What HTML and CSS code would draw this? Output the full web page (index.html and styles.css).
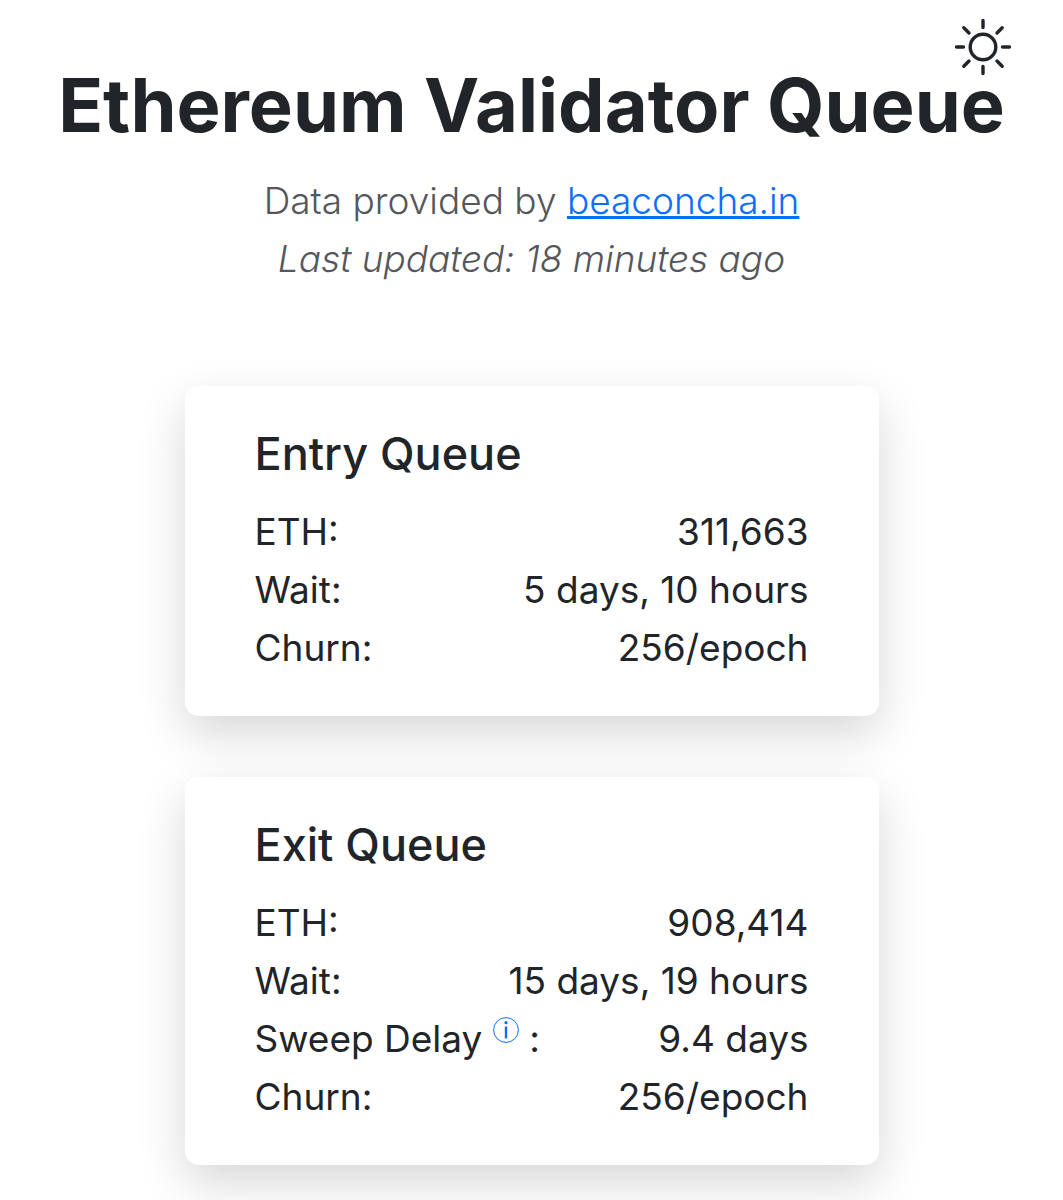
FILE: index.html
```html
<!DOCTYPE html>
<html lang="en">
<head>
  <meta charset="UTF-8">
  <meta name="viewport" content="width=device-width, initial-scale=1.0">
  <title>Ethereum Validator Queue</title>
  <link rel="stylesheet" href="styles.css">
</head>
<body>
  <button class="theme-toggle" type="button" aria-label="Toggle theme">
    <svg viewBox="0 0 58 58" fill="none" stroke="currentColor" stroke-width="3.400" stroke-linecap="round" aria-hidden="true">
      <circle cx="29" cy="29" r="12.800"/>
      <path d="M29 2.500v7M29 48.500v7M2.500 29h7M48.500 29h7M9.800 9.800l5.200 5.200M43 43l5.200 5.200M9.800 48.200l5.200-5.200M43 15l5.200-5.200"/>
    </svg>
  </button>

  <header class="header">
    <h1>Ethereum Validator Queue</h1>
    <p class="lead">Data provided by <a href="#">beaconcha.in</a></p>
    <p class="lead"><em>Last updated: 18 minutes ago</em></p>
  </header>

  <main class="queues">
    <section class="card">
      <h2>Entry Queue</h2>
      <dl>
        <div class="row"><dt>ETH:</dt><dd>311,663</dd></div>
        <div class="row"><dt>Wait:</dt><dd>5 days, 10 hours</dd></div>
        <div class="row"><dt>Churn:</dt><dd>256/epoch</dd></div>
      </dl>
    </section>

    <section class="card">
      <h2>Exit Queue</h2>
      <dl>
        <div class="row"><dt>ETH:</dt><dd>908,414</dd></div>
        <div class="row"><dt>Wait:</dt><dd>15 days, 19 hours</dd></div>
        <div class="row">
          <dt>Sweep Delay <a class="info" href="#" aria-label="About sweep delay"><svg viewBox="0 0 26 26" fill="none" stroke="currentColor" aria-hidden="true"><circle cx="13" cy="13" r="12.400"/><path d="M13 9.500v12" stroke-width="2.400"/><circle cx="13" cy="5.700" r="1.600" fill="currentColor" stroke="none"/></svg></a> :</dt>
          <dd>9.4 days</dd>
        </div>
        <div class="row"><dt>Churn:</dt><dd>256/epoch</dd></div>
      </dl>
    </section>
  </main>
</body>
</html>
```

FILE: styles.css
```css
* { box-sizing: border-box; }
body { margin: 0; background: #fff; color: #212529; font-family: Inter, "Liberation Sans", sans-serif; font-size: 37px; line-height: 58px; }
h1, h2, p, dl, dd { margin: 0; }
a { color: #0d6efd; }

.theme-toggle { position: absolute; top: 18px; right: 51px; width: 58px; height: 58px; padding: 0; border: none; background: none; color: #212529; cursor: pointer; }
.theme-toggle svg { display: block; width: 100%; height: 100%; }

.header { padding: 62px 24px 0; text-align: center; }
.header h1 { margin-bottom: 24px; font-size: 74px; font-weight: 700; line-height: 86px; }
.lead { color: #54575b; font-weight: 300; }

.queues { display: flex; flex-direction: column; align-items: center; gap: 61px; padding: 98px 24px 60px; }
.card { width: 100%; max-width: 694px; padding: 39px 70px; border-radius: 14px; background: #fff; box-shadow: 0 18px 48px rgba(0, 0, 0, 0.16); }
.card h2 { margin-bottom: 20px; font-size: 45px; font-weight: 500; line-height: 58px; }
.row { display: flex; justify-content: space-between; }
.info { display: inline-block; vertical-align: 9px; line-height: 0; }
.info svg { display: block; width: 26px; height: 26px; }
```
